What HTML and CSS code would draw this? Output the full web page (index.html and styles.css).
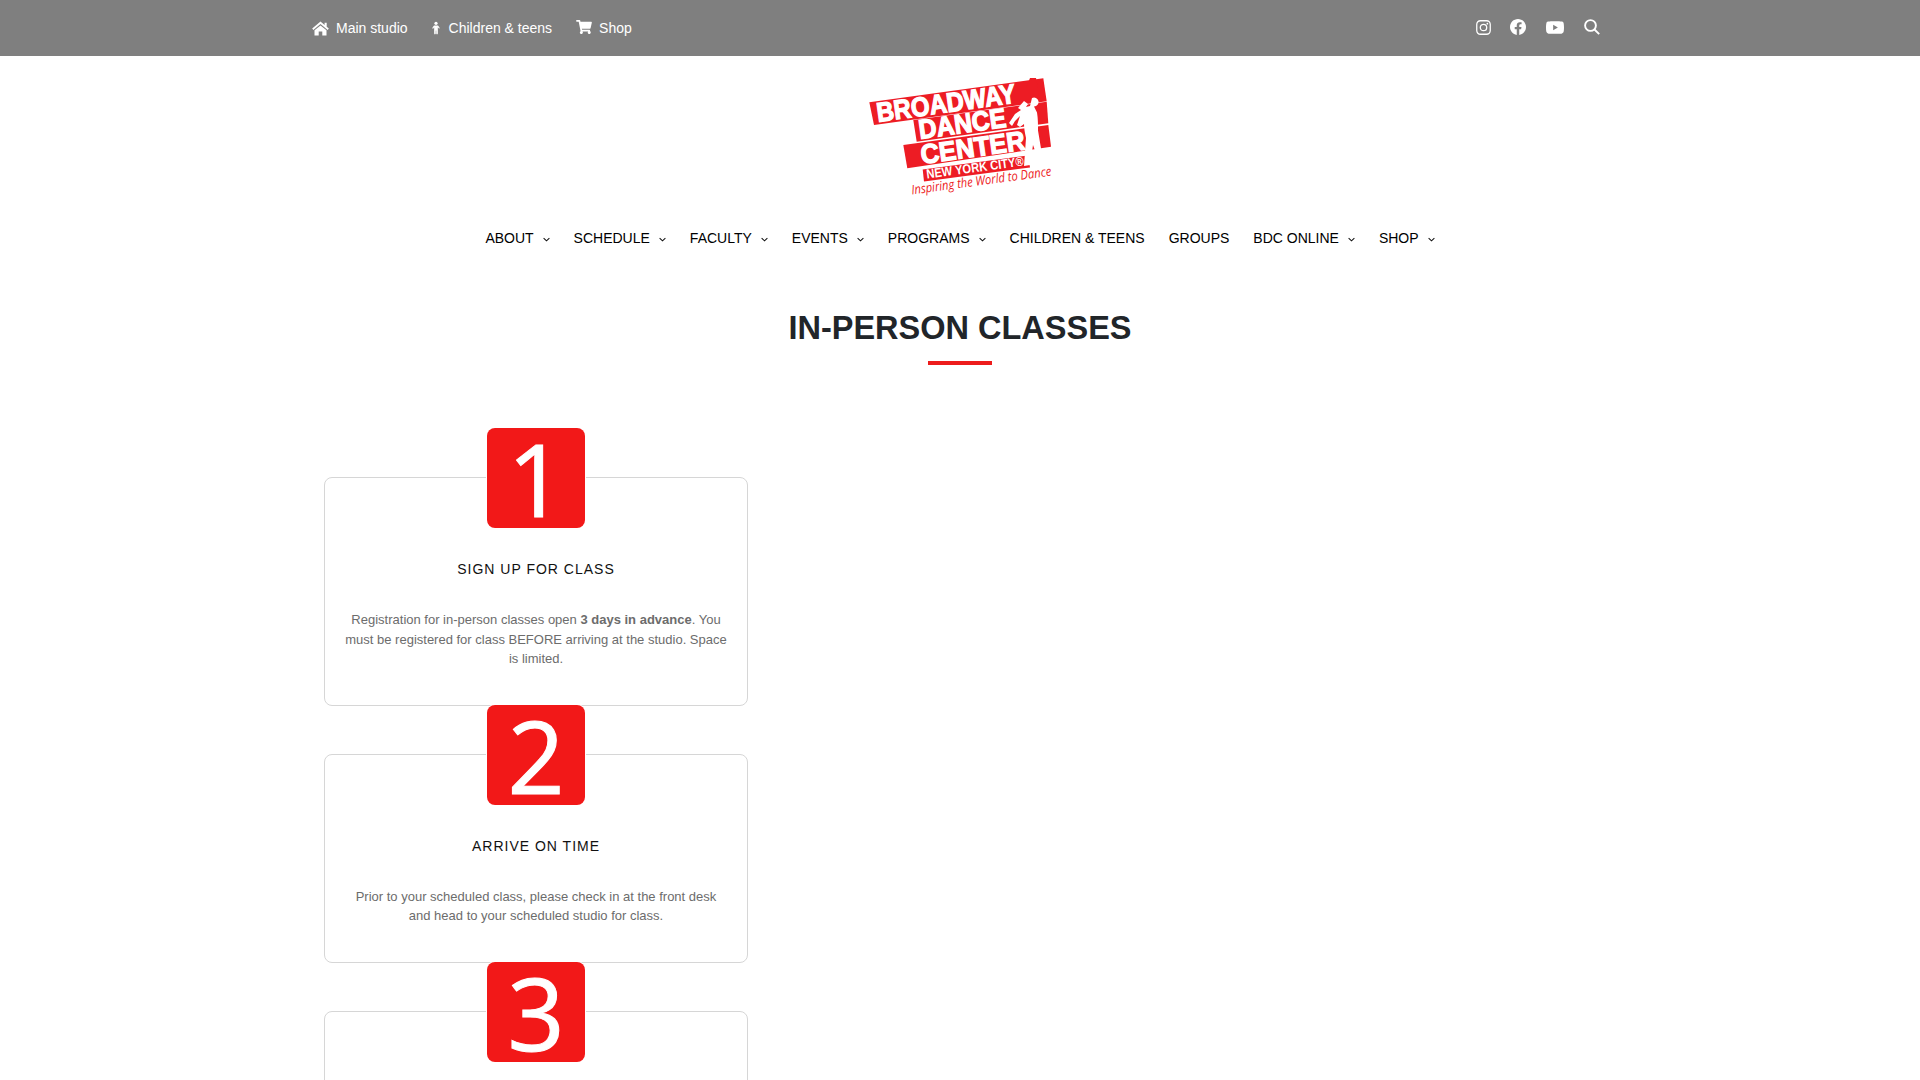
FILE: index.html
```html
<!DOCTYPE html>
<html lang="en">
<head>
<meta charset="utf-8">
<title>In-Person Classes - Broadway Dance Center</title>
<link rel="stylesheet" href="styles.css">
</head>
<body>
<div class="topbar">
  <div class="topbar-inner">
    <nav class="toplinks">
      <a class="toplink"><svg class="ic-home" viewBox="0 0 17 15"><path d="M8.500 .6L12.600 4V1.800h2.100V5.800L16.800 7.600 15.700 8.900 8.500 3.100 1.300 8.900 .2 7.600zM8.500 4.400L14.500 9.200V14.400H10.300V10.400H6.700V14.400H2.500V9.200z"/></svg>Main studio</a>
      <a class="toplink"><svg class="ic-child" viewBox="0 0 10 16"><circle cx="5" cy="2.200" r="2"/><path d="M3.200 4.800h3.600c.5 0 .9.2 1.200.6l1.500 2.200c.2.3.1.7-.2.9-.3.2-.7.1-.9-.2L7.300 7v2.600V15c0 .6-.4 1-1 1s-1-.4-1-1v-4h-.6v4c0 .6-.4 1-1 1s-1-.4-1-1V7L1.600 8.500c-.2.3-.6.4-.9.2-.3-.2-.4-.6-.2-.9L2 5.400c.3-.4.7-.6 1.200-.6z"/></svg>Children &amp; teens</a>
      <a class="toplink"><svg class="ic-cart" viewBox="0 0 576 512"><path d="M528.12 301.319l47.273-208C578.806 78.301 567.391 64 551.99 64H159.208l-9.166-44.81C147.758 8.021 137.93 0 126.529 0H24C10.745 0 0 10.745 0 24v16c0 13.255 10.745 24 24 24h69.883l70.248 343.435C147.325 417.1 136 435.222 136 456c0 30.928 25.072 56 56 56s56-25.072 56-56c0-15.674-6.447-29.835-16.824-40h209.647C430.447 426.165 424 440.326 424 456c0 30.928 25.072 56 56 56s56-25.072 56-56c0-22.172-12.888-41.332-31.579-50.405l5.517-24.276c3.413-15.018-8.002-29.319-23.403-29.319H218.117l-6.545-32h293.145c11.206 0 20.92-7.754 23.403-18.681z"/></svg>Shop</a>
    </nav>
    <div class="social">
      <svg class="ic-insta" viewBox="0 0 14 14"><rect x="0.700" y="0.700" width="12.600" height="12.600" rx="3.400"/><circle cx="7" cy="7" r="3"/><circle class="dot" cx="10.600" cy="3.400" r="0.800"/></svg>
      <svg class="ic-fb" viewBox="8 8 496 496"><path d="M504 256C504 119 393 8 256 8S8 119 8 256c0 123.78 90.69 226.38 209.25 245V327.69h-63V256h63v-54.64c0-62.15 37-96.48 93.67-96.48 27.14 0 55.52 4.84 55.52 4.84v61h-31.28c-30.8 0-40.41 19.12-40.41 38.73V256h68.78l-11 71.69h-57.78V501C413.31 482.38 504 379.78 504 256z"/></svg>
      <svg class="ic-yt" viewBox="15 64 546 384"><path d="M549.655 124.083c-6.281-23.65-24.787-42.276-48.284-48.597C458.781 64 288 64 288 64S117.22 64 74.629 75.486c-23.497 6.322-42.003 24.947-48.284 48.597-11.412 42.867-11.412 132.305-11.412 132.305s0 89.438 11.412 132.305c6.281 23.65 24.787 41.5 48.284 47.821C117.22 448 288 448 288 448s170.78 0 213.371-11.486c23.497-6.321 42.003-24.171 48.284-47.821 11.412-42.867 11.412-132.305 11.412-132.305s0-89.438-11.412-132.305zm-317.51 213.508V175.185l142.739 81.205-142.739 81.201z"/></svg>
      <svg class="ic-search" viewBox="0 0 16 16"><circle cx="6.500" cy="6.500" r="5.400"/><path d="M10.500 10.500L15.200 15.200"/></svg>
    </div>
  </div>
</div>

<header class="brand">
  <svg class="logo" viewBox="0 0 220 135">
    <g class="logo-bands">
      <polygon points="19.300,32.300 193.300,8.300 196.700,31.300 24,55"/>
      <polygon points="63.300,50 196.700,31.700 198.300,53.300 66.700,71.700"/>
      <polygon points="53.300,75 198.300,55 201,76.700 57.300,98.300"/>
      <polygon points="72.700,99.500 178,85.500 180,97.500 74,111.500"/>
      <polygon points="176,18 180,8 186,8 188,18"/>
    </g>
    <g class="logo-white">
      <text class="logo-big" transform="translate(28,52) rotate(-8)" textLength="140" lengthAdjust="spacingAndGlyphs">BROADWAY</text>
      <text class="logo-big" transform="translate(70,69) rotate(-8)" textLength="88" lengthAdjust="spacingAndGlyphs">DANCE</text>
      <text class="logo-big" transform="translate(72,94) rotate(-8)" textLength="105" lengthAdjust="spacingAndGlyphs">CENTER</text>
      <text class="logo-ny" transform="translate(77,108.600) rotate(-7.700)" textLength="98" lengthAdjust="spacingAndGlyphs">NEW YORK CITY®</text>
      <path d="M182 28a4.500 4.500 0 1 1 2 8.500l3 6c1 6 1 12 1 18l5 30-4 1.500-6-17-3 20-6 1 2-28c-1-5-2-9-2-14l-4 3-3-2 3-9-5 5-3 5-3-3 6-9 6-4-3-2 6-7 4 3-2 3 4-1z"/>
    </g>
    <text class="logo-tag" transform="translate(62,124.500) rotate(-7.700)" textLength="141" lengthAdjust="spacingAndGlyphs">Inspiring the World to Dance</text>
  </svg>
  <nav class="mainnav">
    <a class="navitem">ABOUT<svg class="chev" viewBox="0 0 8 5"><path d="M.7 .8L4 4 7.300 .8"/></svg></a>
    <a class="navitem">SCHEDULE<svg class="chev" viewBox="0 0 8 5"><path d="M.7 .8L4 4 7.300 .8"/></svg></a>
    <a class="navitem">FACULTY<svg class="chev" viewBox="0 0 8 5"><path d="M.7 .8L4 4 7.300 .8"/></svg></a>
    <a class="navitem">EVENTS<svg class="chev" viewBox="0 0 8 5"><path d="M.7 .8L4 4 7.300 .8"/></svg></a>
    <a class="navitem">PROGRAMS<svg class="chev" viewBox="0 0 8 5"><path d="M.7 .8L4 4 7.300 .8"/></svg></a>
    <a class="navitem">CHILDREN &amp; TEENS</a>
    <a class="navitem">GROUPS</a>
    <a class="navitem">BDC ONLINE<svg class="chev" viewBox="0 0 8 5"><path d="M.7 .8L4 4 7.300 .8"/></svg></a>
    <a class="navitem">SHOP<svg class="chev" viewBox="0 0 8 5"><path d="M.7 .8L4 4 7.300 .8"/></svg></a>
  </nav>
</header>

<main class="content">
  <h1 class="title">IN-PERSON CLASSES</h1>
  <div class="rule"></div>
  <div class="steps">
    <section class="step">
      <div class="badge">1</div>
      <div class="card">
        <h2 class="card-title">SIGN UP FOR CLASS</h2>
        <p class="card-text">Registration for in-person classes open <b>3 days in advance</b>. You must be registered for class BEFORE arriving at the studio. Space is limited.</p>
      </div>
    </section>
    <section class="step">
      <div class="badge">2</div>
      <div class="card">
        <h2 class="card-title">ARRIVE ON TIME</h2>
        <p class="card-text">Prior to your scheduled class, please check in at the front desk and head to your scheduled studio for class.</p>
      </div>
    </section>
    <section class="step">
      <div class="badge">3</div>
      <div class="card card-last"></div>
    </section>
  </div>
</main>
</body>
</html>
```
FILE: styles.css
```css
* { box-sizing: border-box; }
html, body { margin: 0; height: 100%; overflow: hidden; background: #fff; }
body { font-family: "Liberation Sans", Arial, sans-serif; color: #212529; }

.topbar { height: 56px; background: #7f7f7f; }
.topbar-inner {
  width: 1296px; height: 100%; margin: 0 auto; padding: 0 8px 0 0;
  display: flex; align-items: center; justify-content: space-between;
}
.toplinks { display: flex; gap: 24px; }
.toplink { display: flex; align-items: center; color: #fff; font-size: 14px; line-height: 56px; }
.toplink svg { fill: #fff; display: block; }
.ic-home { width: 17px; height: 15px; margin-right: 7px; }
.ic-child { width: 8px; height: 14px; margin-right: 9px; }
.ic-cart { width: 16px; height: 14px; margin-right: 7px; margin-top: -3px; }

.social { display: flex; align-items: center; gap: 19px; margin-top: -2px; }
.social svg { display: block; }
.ic-insta { width: 15px; height: 15px; fill: none; stroke: #fff; stroke-width: 1.200; }
.ic-insta .dot { fill: #fff; stroke: none; }
.ic-fb { width: 16px; height: 16px; fill: #fff; }
.ic-yt { width: 18px; height: 13px; fill: #fff; margin-left: 1px; }
.ic-search { width: 16px; height: 16px; fill: none; stroke: #fff; stroke-width: 1.900; margin-left: 1px; }

.brand { display: flex; flex-direction: column; align-items: center; padding-top: 14px; }
.logo { display: block; width: 220px; height: 135px; }
.logo-bands polygon { fill: #ed1c24; }
.logo-white { fill: #fff; }
.logo-big { font-family: "Liberation Sans", Arial, sans-serif; font-weight: 700; font-size: 27px; stroke: #fff; stroke-width: 1.300px; }
.logo-ny { font-family: "Liberation Sans", Arial, sans-serif; font-weight: 700; font-size: 13px; }
.logo-tag { font-family: "Open Sans", sans-serif; font-style: italic; font-size: 13px; fill: #ed1c24; }

.mainnav { display: flex; justify-content: center; margin-top: 25px; height: 17px; }
.navitem {
  display: flex; align-items: center; padding: 0 12px; color: #000;
  font-size: 14px; line-height: 17px;
}
.chev { width: 7px; height: 5px; margin-left: 9px; margin-top: 2px; fill: none; stroke: #111; stroke-width: 1.200; }

.content { width: 1272px; margin: 0 auto; }
.title {
  margin: 61px 0 0; text-align: center; font-size: 32.500px; line-height: 40px; font-weight: 700; color: #212529;
}
.rule { width: 64px; height: 4px; margin: 13px auto 0; background: #ed1c1c; }

.steps { width: 424px; margin-top: 63px; }
.step { display: flow-root; margin-bottom: -0.700px; }
.badge {
  position: relative; z-index: 1; width: 98px; height: 100px; margin: 0 auto -51px;
  background: #f21818; border-radius: 8px; box-shadow: 0 0 0 1px #fff;
  display: flex; align-items: center; justify-content: center;
  color: #fff; font-family: "Open Sans", sans-serif; font-size: 100px; font-weight: 500; line-height: 100px;
  -webkit-text-stroke: 1px #fff;
}
.card {
  border: 1px solid #d6d6d6; border-radius: 8px; padding: 83px 20px 36px; text-align: center; background: #fff;
}
.card-last { height: 200px; }
.card-title {
  margin: 0; font-size: 14px; line-height: 17px; font-weight: 400; letter-spacing: 1px; color: #111;
}
.card-text { margin: 32px 0 0; font-size: 13px; line-height: 19.500px; color: #6c6c6c; }
```
